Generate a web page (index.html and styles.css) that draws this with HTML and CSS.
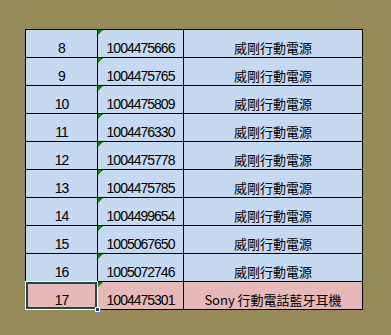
FILE: index.html
```html
<!DOCTYPE html>
<html>
<head>
<meta charset="utf-8">
<link rel="stylesheet" href="styles.css">
</head>
<body>
<div class="sheet">
<table class="grid">
<tr><td class="n">8</td><td class="id tri">1004475666</td><td class="name">威剛行動電源</td></tr>
<tr><td class="n">9</td><td class="id tri">1004475765</td><td class="name">威剛行動電源</td></tr>
<tr><td class="n">10</td><td class="id tri">1004475809</td><td class="name">威剛行動電源</td></tr>
<tr><td class="n">11</td><td class="id tri">1004476330</td><td class="name">威剛行動電源</td></tr>
<tr><td class="n">12</td><td class="id tri">1004475778</td><td class="name">威剛行動電源</td></tr>
<tr><td class="n">13</td><td class="id tri">1004475785</td><td class="name">威剛行動電源</td></tr>
<tr><td class="n">14</td><td class="id tri">1004499654</td><td class="name">威剛行動電源</td></tr>
<tr><td class="n">15</td><td class="id tri">1005067650</td><td class="name">威剛行動電源</td></tr>
<tr><td class="n">16</td><td class="id tri">1005072746</td><td class="name">威剛行動電源</td></tr>
<tr class="pink"><td class="n sel">17</td><td class="id tri">1004475301</td><td class="name">Sony 行動電話藍牙耳機</td></tr>
</table>
</div>
</body>
</html>
```
FILE: styles.css
```css
html, body {
  margin: 0;
  padding: 0;
  background: #968b58;
  width: 391px;
  height: 335px;
  overflow: hidden;
}
.sheet {
  padding: 29px 0 0 25px;
}
.grid {
  border-collapse: collapse;
  background: #c5d9f1;
}
.grid td {
  border: 1px solid #000;
  height: 25px;
  padding: 0 0 2px 0;
  vertical-align: bottom;
  text-align: center;
  font-family: "Liberation Sans", "Noto Sans CJK TC", sans-serif;
  font-size: 14px;
  line-height: 14px;
  color: #000;
  position: relative;
}
.grid .n { width: 71px; letter-spacing: -1px; }
.grid .id { width: 85px; letter-spacing: -1px; }
.grid .name {
  width: 178px;
  font-family: "Noto Sans CJK TC", sans-serif;
  font-size: 13px;
}
.grid .pink { background: #e6b8b7; }
.tri::before {
  content: "";
  position: absolute;
  left: 0;
  top: 0;
  border-top: 5px solid #0a8a0a;
  border-right: 5px solid transparent;
}
.sel::after {
  content: "";
  position: absolute;
  left: -1px;
  top: -1px;
  right: -1px;
  bottom: -1px;
  border: 1px solid #fff;
  box-shadow: inset 0 0 0 2px #1d4a47;
}
.sel::before {
  content: "";
  position: absolute;
  right: -3px;
  bottom: -3px;
  width: 3px;
  height: 3px;
  background: #1d4a47;
  border: 1px solid #fff;
  box-shadow: 1px 1px 0 #7f7fb8;
  z-index: 2;
}
```
